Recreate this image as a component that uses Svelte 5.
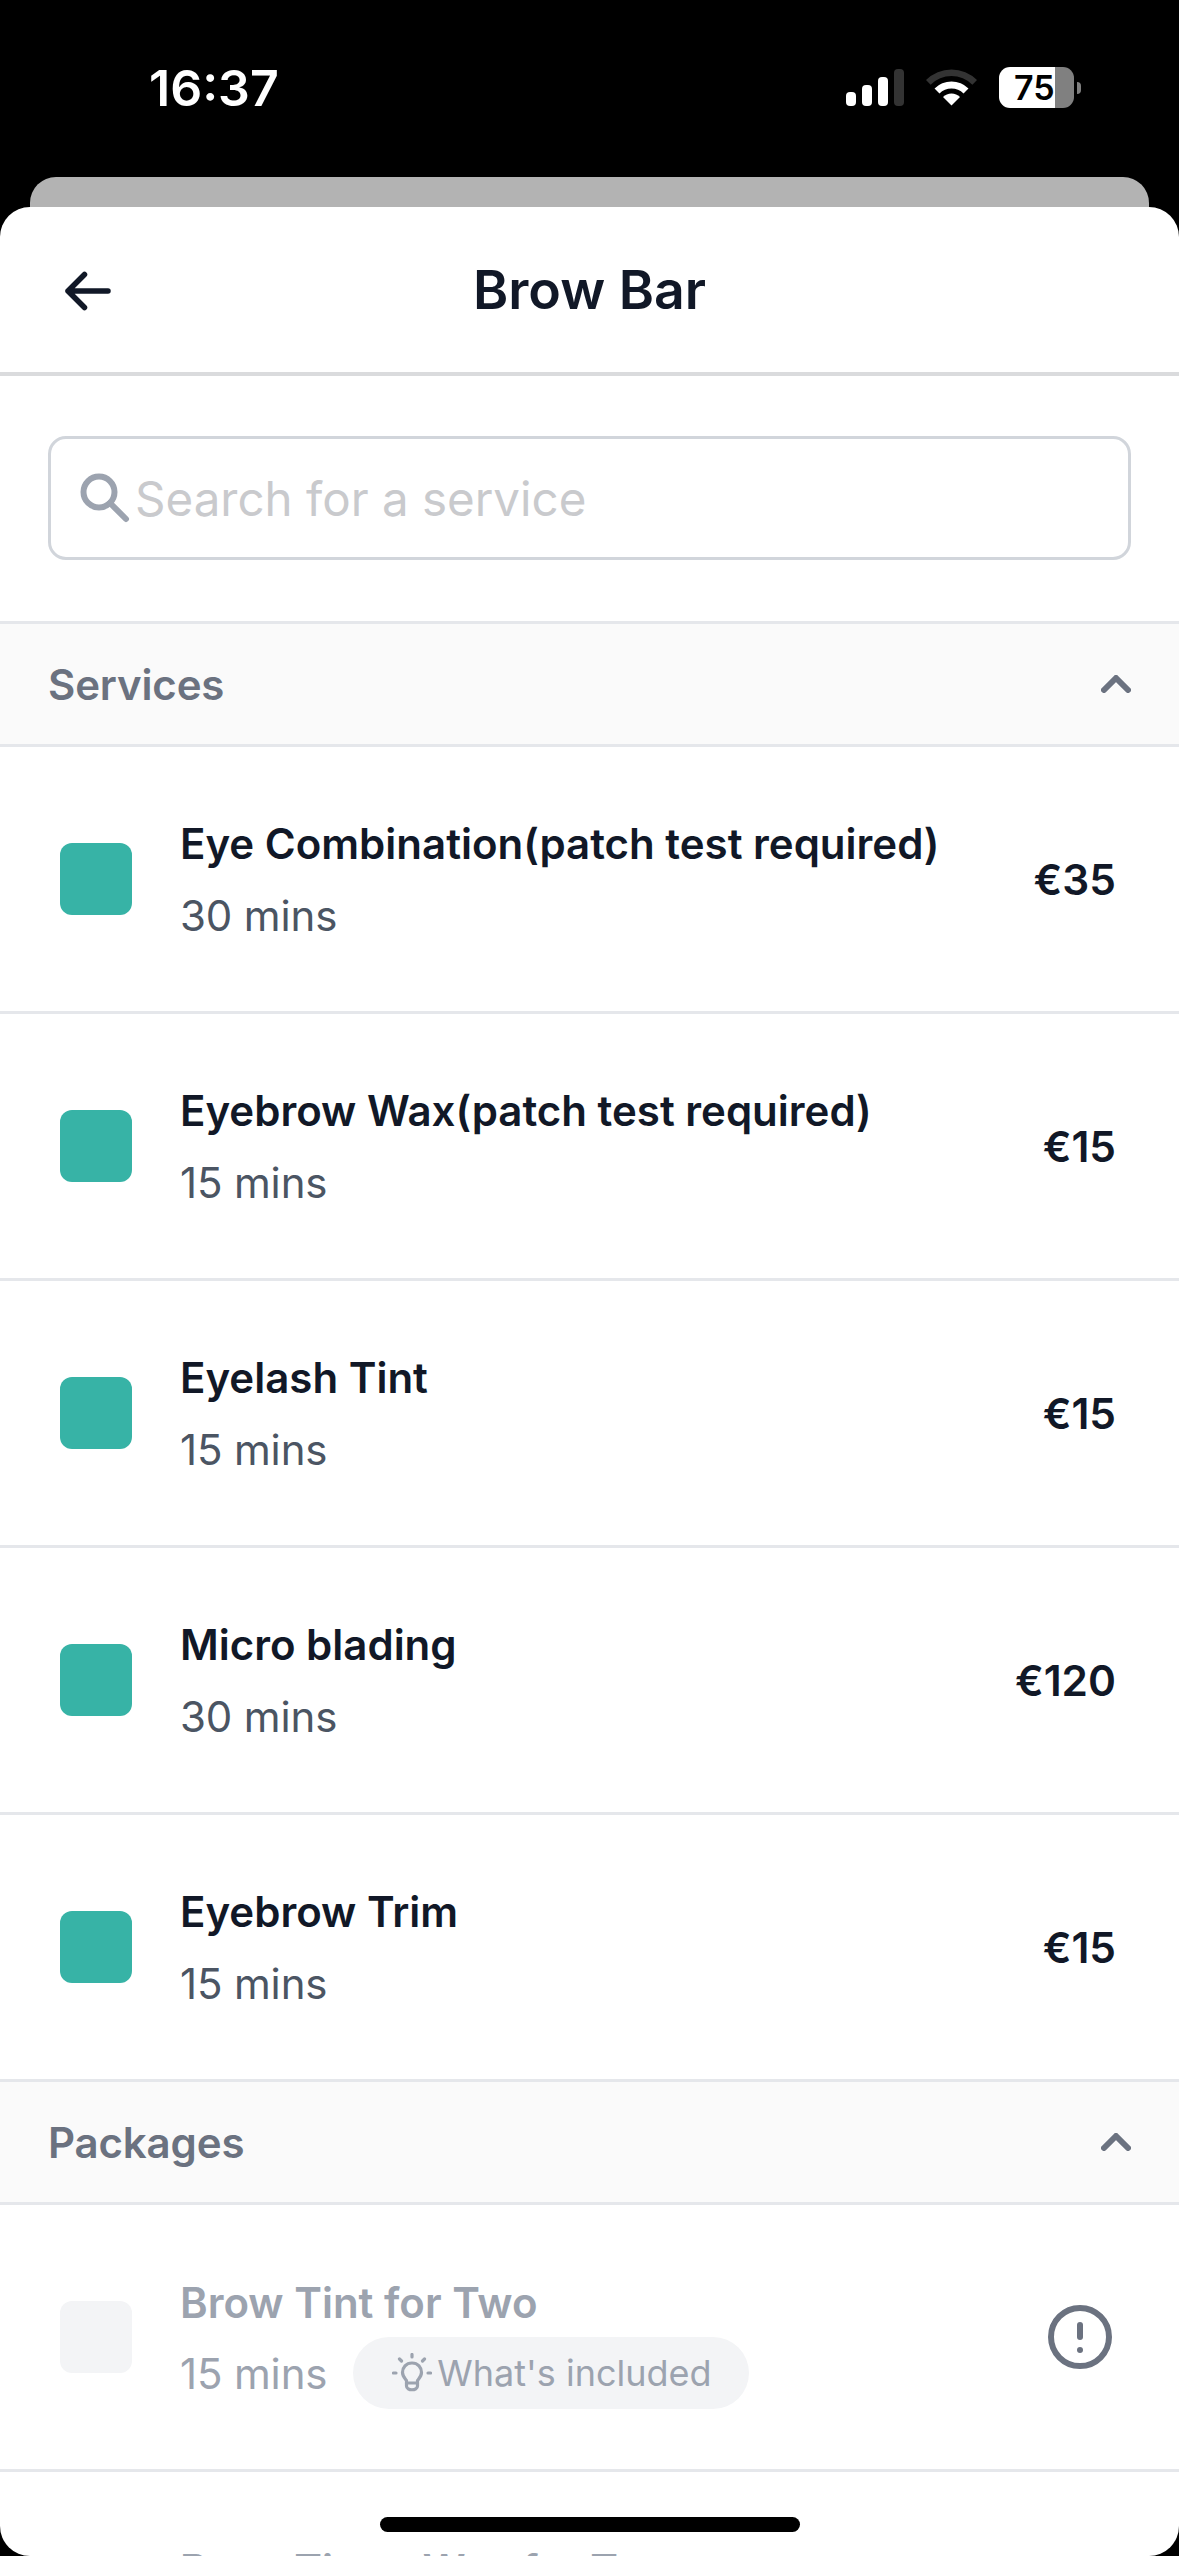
<script>
  const services = [
    { name: 'Eye Combination(patch test required)', time: '30 mins', price: '€35' },
    { name: 'Eyebrow Wax(patch test required)', time: '15 mins', price: '€15' },
    { name: 'Eyelash Tint', time: '15 mins', price: '€15' },
    { name: 'Micro blading', time: '30 mins', price: '€120' },
    { name: 'Eyebrow Trim', time: '15 mins', price: '€15' }
  ];
  const packages = ['Brow Tint for Two', 'Brow Tint + Wax for Two'];
</script>

<div class="phone">
  <div class="status">
    <span class="clock">16:37</span>
    <div class="status-icons">
      <svg width="58" height="37" viewBox="0 0 58 37">
        <rect x="0" y="23" width="10" height="14" rx="4" fill="#fff" />
        <rect x="16" y="16" width="10" height="21" rx="4" fill="#fff" />
        <rect x="32" y="8" width="10" height="29" rx="4" fill="#fff" />
        <rect x="48" y="0" width="10" height="37" rx="4" fill="#333" />
      </svg>
      <svg width="51" height="37" viewBox="0 0 51 37">
        <path d="M0 11 A36 36 0 0 1 51 11 L46.36 15.64 A29.5 29.5 0 0 0 4.64 15.64 Z" fill="#333" />
        <path d="M8.53 19.53 A24 24 0 0 1 42.47 19.53 L37.52 24.48 A17 17 0 0 0 13.48 24.48 Z" fill="#fff" />
        <path d="M17 28 A12 12 0 0 1 34 28 L25.5 36.5 Z" fill="#fff" />
      </svg>
      <div class="battery">
        <div class="battery-body"><span>75</span></div>
        <div class="battery-tip"></div>
      </div>
    </div>
  </div>

  <div class="peek"></div>

  <div class="sheet">
    <header>
      <button class="back" aria-label="Back">
        <svg width="48" height="40" viewBox="0 0 48 40" fill="none" stroke="#111827" stroke-width="5.5" stroke-linecap="round" stroke-linejoin="round">
          <path d="M44 20 H4 M20.5 3.5 L4 20 L20.5 36.5" />
        </svg>
      </button>
      <h1>Brow Bar</h1>
    </header>

    <div class="search-wrap">
      <div class="search">
        <svg width="50" height="50" viewBox="0 0 50 50" fill="none" stroke="#9ca3af" stroke-width="6" stroke-linecap="round">
          <circle cx="19" cy="19" r="15.5" />
          <path d="M30 30 L46 46" />
        </svg>
        <span>Search for a service</span>
      </div>
    </div>

    <div class="section">
      <span>Services</span>
      <svg width="30" height="18" viewBox="0 0 30 18" fill="none" stroke="#6b7280" stroke-width="6" stroke-linecap="round" stroke-linejoin="round"><path d="M3 15 L15 3 L27 15" /></svg>
    </div>

    {#each services as s}
      <div class="row">
        <div class="swatch"></div>
        <div class="info">
          <div class="name">{s.name}</div>
          <div class="meta"><span class="time">{s.time}</span></div>
        </div>
        <div class="price">{s.price}</div>
      </div>
    {/each}

    <div class="section">
      <span>Packages</span>
      <svg width="30" height="18" viewBox="0 0 30 18" fill="none" stroke="#6b7280" stroke-width="6" stroke-linecap="round" stroke-linejoin="round"><path d="M3 15 L15 3 L27 15" /></svg>
    </div>

    {#each packages as p}
      <div class="row off">
        <div class="swatch"></div>
        <div class="info">
          <div class="name">{p}</div>
          <div class="meta">
            <span class="time">15 mins</span>
            <span class="pill">
              <svg width="40" height="40" viewBox="0 0 40 40" fill="none" stroke="#9ca3af" stroke-width="3.2" stroke-linecap="round" stroke-linejoin="round">
                <path d="M20 10 C14 10 10.5 14.5 10.5 19.5 C10.5 23 12.5 25 14.5 27.5 V33 C14.5 38 25.5 38 25.5 33 V27.5 C27.5 25 29.5 23 29.5 19.5 C29.5 14.5 26 10 20 10 Z" />
                <path d="M14.5 30 H25.5" />
                <path d="M20 1.5 V4 M7.5 6 L9.5 8 M32.5 6 L30.5 8 M1.5 20 H4 M36 20 H38.5" />
              </svg>
              What's included
            </span>
          </div>
        </div>
        <svg class="alert" width="64" height="64" viewBox="0 0 64 64" fill="none" stroke="#6b7280" stroke-linecap="round">
          <circle cx="32" cy="32" r="29" stroke-width="6" />
          <path d="M32 20 V32" stroke-width="6" />
          <circle cx="32" cy="45" r="3" fill="#6b7280" stroke="none" />
        </svg>
      </div>
    {/each}

    <div class="home"></div>
  </div>
</div>

<style>
  :global(body) {
    margin: 0;
    background: #000;
  }
  .phone {
    width: 1179px;
    height: 2556px;
    background: #000;
    display: flex;
    flex-direction: column;
    overflow: hidden;
    font-family: Inter, "Liberation Sans", sans-serif;
  }
  .status {
    height: 177px;
    flex: none;
    display: flex;
    justify-content: space-between;
    box-sizing: border-box;
    padding: 60px 98px 0 149px;
    color: #fff;
  }
  .clock {
    font-size: 50px;
    font-weight: 600;
    line-height: 56px;
  }
  .status-icons {
    display: flex;
    align-items: center;
    align-self: flex-start;
    gap: 22px;
    padding-top: 7px;
  }
  .battery {
    display: flex;
    align-items: center;
    gap: 3px;
  }
  .battery-body {
    width: 75px;
    height: 41px;
    border-radius: 11px;
    background: linear-gradient(90deg, #fff 0 75%, #808080 75% 100%);
    color: #000;
    font-size: 34px;
    font-weight: 600;
    line-height: 41px;
    box-sizing: border-box;
    padding-left: 15px;
  }
  .battery-tip {
    width: 4px;
    height: 12px;
    background: #808080;
    border-radius: 0 4px 4px 0;
  }
  .peek {
    height: 30px;
    flex: none;
    margin: 0 30px;
    background: #b3b3b3;
    border-radius: 26px 26px 0 0;
  }
  .sheet {
    position: relative;
    flex: 1;
    min-height: 0;
    background: #fff;
    border-radius: 30px;
    overflow: hidden;
  }
  header {
    height: 165px;
    display: flex;
    align-items: center;
    justify-content: center;
    position: relative;
    border-bottom: 4px solid #dadbdd;
  }
  .back {
    position: absolute;
    left: 64px;
    top: 64px;
    padding: 0;
    border: 0;
    background: none;
    display: flex;
  }
  h1 {
    margin: 0;
    font-size: 53.6px;
    font-weight: 600;
    color: #111827;
  }
  .search-wrap {
    padding: 60px 48px 61px;
    border-bottom: 3px solid #e5e7eb;
  }
  .search {
    height: 124px;
    box-sizing: border-box;
    border: 3px solid #d1d5db;
    border-radius: 18px;
    display: flex;
    align-items: center;
    gap: 5px;
    padding-left: 29px;
    font-size: 47.5px;
    color: #c9cacd;
  }
  .section {
    height: 123px;
    box-sizing: border-box;
    background: #fafafa;
    border-bottom: 3px solid #e5e7eb;
    display: flex;
    align-items: center;
    justify-content: space-between;
    padding: 0 48px;
    font-size: 42px;
    letter-spacing: -0.15px;
    font-weight: 600;
    color: #6b7280;
  }
  .row {
    height: 267px;
    box-sizing: border-box;
    border-bottom: 3px solid #e5e7eb;
    display: flex;
    align-items: center;
    padding: 0 63px 0 60px;
  }
  .swatch {
    width: 72px;
    height: 72px;
    flex: none;
    border-radius: 12px;
    background: #37b3a6;
    margin-right: 48px;
  }
  .info {
    flex: 1;
    min-width: 0;
  }
  .name {
    font-size: 42px;
    font-weight: 600;
    color: #111827;
    line-height: 57px;
  }
  .meta {
    display: flex;
    align-items: center;
    gap: 26px;
    margin-top: 15px;
    min-height: 56px;
  }
  .time {
    font-size: 42px;
    letter-spacing: -0.15px;
    color: #4b5563;
  }
  .price {
    font-size: 42.4px;
    font-weight: 600;
    color: #111827;
  }
  .off .swatch {
    background: #f3f4f6;
  }
  .off .name, .off .time {
    color: #9ca3af;
  }
  .off .info {
    padding-top: 9px;
  }
  .off .meta {
    margin-top: 6px;
  }
  .pill {
    display: flex;
    align-items: center;
    gap: 5px;
    height: 72px;
    padding: 0 37px 0 39px;
    border-radius: 36px;
    background: #f3f4f6;
    font-size: 36px;
    color: #9ca3af;
  }
  .alert {
    flex: none;
    margin-right: 4px;
  }
  .home {
    position: absolute;
    left: 380px;
    bottom: 24px;
    width: 420px;
    height: 15px;
    border-radius: 7.5px;
    background: #000;
  }
</style>
